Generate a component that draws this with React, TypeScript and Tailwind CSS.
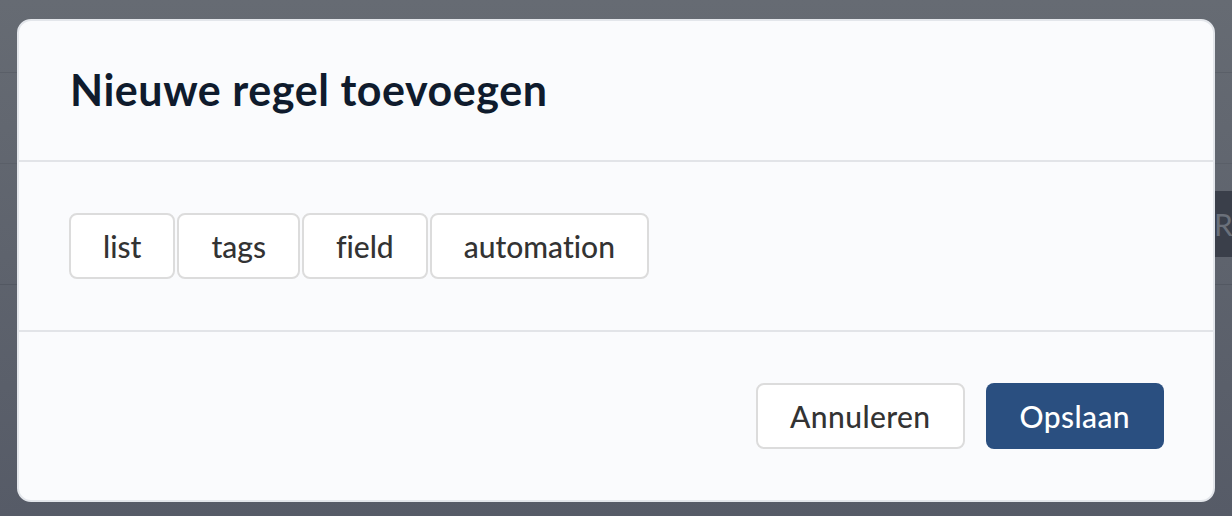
import React from "react";

const tags = ["list", "tags", "field", "automation"];

function BackgroundPage() {
  return (
    <div className="flex flex-col h-full w-full bg-gradient-to-b from-[#666b73] to-[#565b67]">
      <div className="h-[73px] border-b border-[#5a5f68]" />
      <div className="h-[91px] border-b border-[#5a5f68]" />
      <div className="h-[121px] border-b border-[#535862] flex items-center justify-end">
        <div className="h-[66px] w-[20px] bg-[#3a3f4a] flex items-center pl-[2px] text-[30px] text-[#6a707a] overflow-hidden">
          R
        </div>
      </div>
      <div className="flex-1" />
    </div>
  );
}

export default function App() {
  return (
    <div className="relative h-[516px] w-full overflow-hidden font-['Lato',sans-serif] [font-variant-ligatures:none]">
      <BackgroundPage />

      <div className="absolute left-[17px] top-[19px] w-[1198px] h-[483px] flex flex-col rounded-[14px] border-2 border-[#e3e6eb] bg-[#fafbfd]">
        <div className="h-[141px] flex items-center px-[51px] border-b-2 border-[#e2e4e8]">
          <h1 className="text-[43px] font-bold text-[#0f1b2d] tracking-[0.55px]">
            Nieuwe regel toevoegen
          </h1>
        </div>

        <div className="h-[170px] flex items-center gap-[2px] px-[50px] border-b-2 border-[#e2e4e8]">
          {tags.map((tag) => (
            <button
              key={tag}
              className="h-[66px] px-[32px] rounded-[8px] border-2 border-[#dcdcdc] bg-white text-[30px] font-medium text-[#333333]"
            >
              {tag}
            </button>
          ))}
        </div>

        <div className="flex-1 flex items-center justify-end gap-[21px] px-[49px]">
          <button className="h-[66px] px-[32px] rounded-[8px] border-2 border-[#dcdcdc] bg-white text-[30px] font-medium text-[#333333] tracking-[0.4px]">
            Annuleren
          </button>
          <button className="h-[66px] px-[34px] rounded-[8px] bg-[#2a4f80] text-[30px] font-medium text-white tracking-[0.4px]">
            Opslaan
          </button>
        </div>
      </div>
    </div>
  );
}
